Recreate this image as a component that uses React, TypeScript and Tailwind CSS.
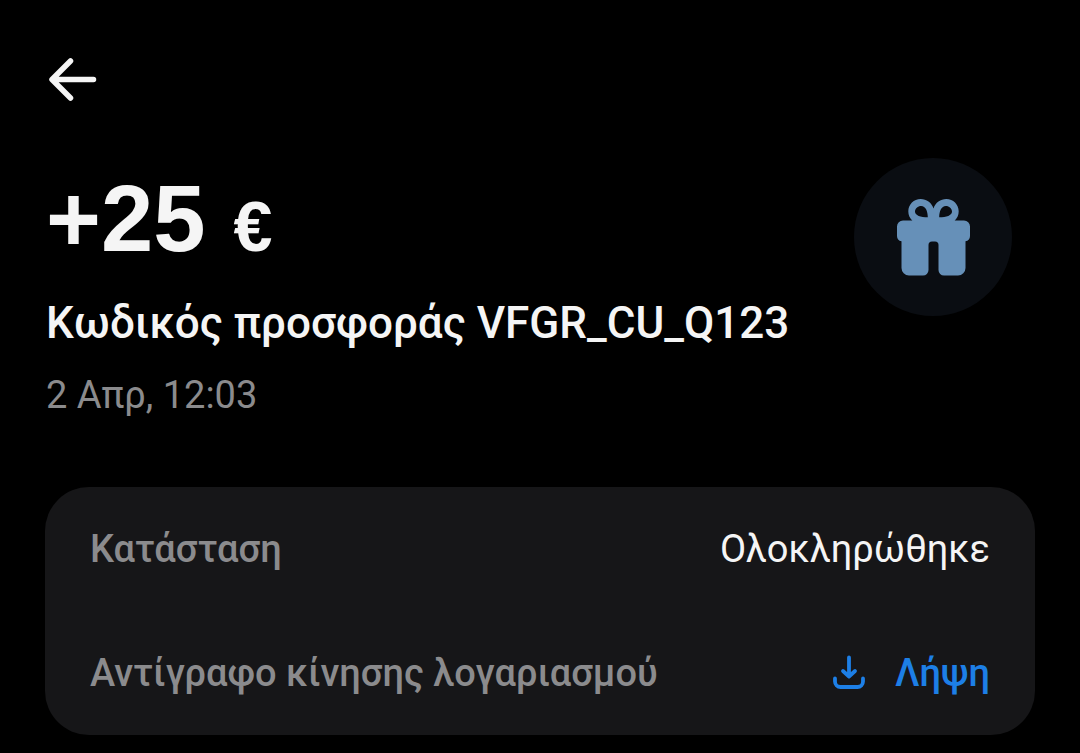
import React from 'react';

const BackIcon = () => (
  <svg className="w-12 h-12" viewBox="0 0 48 48" fill="none" stroke="currentColor" strokeWidth="5.5" strokeLinecap="round" strokeLinejoin="round">
    <path d="M44.5 23.5H4M21.5 5L3 23.5 21.5 42" />
  </svg>
);

const GiftIcon = () => (
  <svg className="w-[73px] h-[77px]" viewBox="0 0 73 77" fill="currentColor">
    {/* Ribbon loops */}
    <path
      fillRule="evenodd"
      d="M36.5 9.5C34.5 3.5 29.5 0 23.7 0C16.8 0 11.3 5.5 11.3 12.3C11.3 16 12.8 19.3 15.2 21.5V23H57.8V21.5C60.2 19.3 61.7 16 61.7 12.3C61.7 5.5 56.2 0 49.3 0C43.5 0 38.5 3.5 36.5 9.5ZM24.2 7C28.5 7 30.8 12 30.8 18.3C23.5 18.3 18 16.5 18 12.5C18 9.5 20.8 7 24.2 7ZM48.8 7C44.5 7 42.2 12 42.2 18.3C49.5 18.3 55 16.5 55 12.5C55 9.5 52.2 7 48.8 7Z"
    />
    {/* Lid and box */}
    <path d="M6 21.5H67A6 6 0 0 1 73 27.5V37A5.5 5.5 0 0 1 68.5 42.3V69A7.5 7.5 0 0 1 61 76.5H47A5.5 5.5 0 0 1 41.5 71V46A3.5 3.5 0 0 0 38 42.5H35A3.5 3.5 0 0 0 31.5 46V71A5.5 5.5 0 0 1 26 76.5H12A7.5 7.5 0 0 1 4.5 69V42.3A5.5 5.5 0 0 1 0 37V27.5A6 6 0 0 1 6 21.5Z" />
  </svg>
);

const DownloadIcon = () => (
  <svg className="w-9 h-9" viewBox="0 0 36 36" fill="none" stroke="currentColor" strokeWidth="3.8" strokeLinecap="round" strokeLinejoin="round">
    <path d="M18 2.5V21M12 16L18 21.5 24 16M4 23.5V26.5A5.5 5.5 0 0 0 9.5 32H26.5A5.5 5.5 0 0 0 32 26.5V23.5" />
  </svg>
);

export default function App() {
  return (
    <main className="min-h-screen bg-black text-[#f5f5f5] font-['Roboto',sans-serif] px-[45px] pt-14 pb-5">
      <button type="button" aria-label="Πίσω" className="block ml-1">
        <BackIcon />
      </button>

      <header className="flex items-start justify-between mt-[54px] pl-px pr-[23px]">
        <div>
          <h1 className="flex items-baseline gap-7 font-['Liberation_Sans',sans-serif] text-[94px] leading-[122px] font-bold">
            <span>+25</span>
            <span className="text-[70px]">€</span>
          </h1>
          <p className="mt-[7px] text-[44px] leading-[56px] font-medium">Κωδικός προσφοράς VFGR_CU_Q123</p>
          <p className="mt-4 text-[38px] leading-[56px] text-[#8b8b8d]">2 Απρ, 12:03</p>
        </div>
        <div className="flex items-center justify-center shrink-0 w-[158px] h-[158px] rounded-full bg-[#0a0d12] text-[#6690b8]">
          <GiftIcon />
        </div>
      </header>

      <dl className="mt-16 rounded-[44px] bg-[#161618] px-[45px] text-[38px]">
        <div className="flex items-center justify-between h-[124px]">
          <dt className="font-medium text-[#8b8b8d]">Κατάσταση</dt>
          <dd>Ολοκληρώθηκε</dd>
        </div>
        <div className="flex items-center justify-between h-[124px]">
          <dt className="font-medium text-[#8b8b8d]">Αντίγραφο κίνησης λογαριασμού</dt>
          <dd>
            <button type="button" className="flex items-center gap-7 font-medium text-[#1d7fe6]">
              <DownloadIcon />
              Λήψη
            </button>
          </dd>
        </div>
      </dl>
    </main>
  );
}
